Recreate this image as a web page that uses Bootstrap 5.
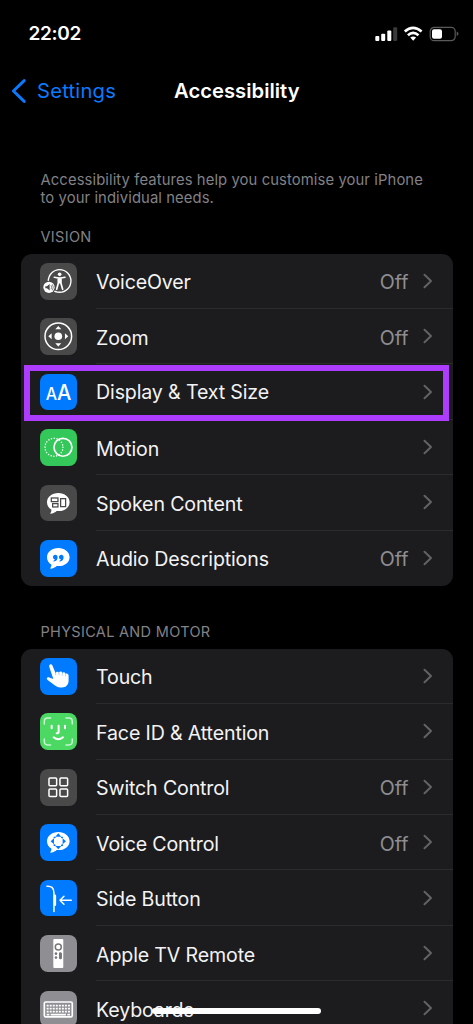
<!DOCTYPE html>
<html lang="en">
<head>
<meta charset="utf-8">
<meta name="viewport" content="width=device-width, initial-scale=1">
<title>Accessibility</title>
<link href="https://cdn.jsdelivr.net/npm/bootstrap@5.3.0/dist/css/bootstrap.min.css" rel="stylesheet">
<style>
body{background:#000;color:#f3f3f5;font-family:Inter,"Liberation Sans",sans-serif;height:1024px;overflow:hidden;letter-spacing:0}
.screen{width:473px;height:1024px;overflow:hidden}
.status{height:68px;padding:0 14px 0 28.5px}
.clock{font-size:19px;font-weight:600;line-height:68px;color:#fff;letter-spacing:-.3px}
.topbar{height:46px;padding-left:11px;display:grid;grid-template-columns:163px 1fr}
.back{color:#0a7aff;font-size:20.2px;gap:10px;letter-spacing:.22px}
.title{font-size:20.2px;font-weight:600;color:#fff;letter-spacing:.03px}
.note{color:#828286;font-size:14.8px;line-height:18px;padding:57px 0 0 40.5px;height:107px;letter-spacing:.1px}
.heading{color:#828286;font-size:14.5px;line-height:18px;padding-left:40.5px;height:32.5px;padding-top:7px;letter-spacing:.32px}
.heading.later{height:62.5px;padding-top:37px}
.group{background:#1c1c1e;border-radius:11px;margin:0 20.5px;width:432px;border:0}
.item{height:55.45px;background:transparent;border:0;padding:0 0 0 19.8px;color:inherit}
.tile{width:36.6px;height:36.6px;border-radius:8px;flex:none;margin-right:19.2px}
.tile svg{display:block;width:100%;height:100%}
.gray{background:#49494a}.blue{background:#007aff}.green{background:#34c759}.mint{background:#4bd964}.silver{background:#8e8e93}
.line{border-bottom:1px solid #2b2b2d;height:100%;padding-right:20px}
.item:last-child .line{border-color:transparent}
.label{font-size:19.6px;line-height:24px;letter-spacing:-.15px;padding-top:3px}
.label.level{padding-top:0}
.value{font-size:19.6px;line-height:24px;color:#8e8e93;margin-right:14px;padding-top:3px}
.chev{width:10px;height:16px}
.marked{outline:6px solid #ae3cff;left:24px;top:364.5px;width:424.5px;height:56px;outline-offset:-6px;z-index:2}
.homebar{left:152px;top:1007.5px;width:169px;height:6px;border-radius:3px;background:#fff;z-index:3}
</style>
</head>
<body>
<svg width="0" height="0" class="position-absolute"><defs>
<symbol id="chev" viewBox="0 0 10 16"><path d="M1.500 1.800 8 8l-6.500 6.200" fill="none" stroke="#626266" stroke-width="2" stroke-linecap="round" stroke-linejoin="round"/></symbol>
<symbol id="bubble" viewBox="0 0 110 110"><path d="M55 24C36 24 21 36 21 52c0 9 5 17 13 22 1 4-1 8-3 11 0 2 2 2 4 1 6-2 11-4 15-8C72 81 89 69 89 52 89 36 74 24 55 24Z" fill="#fff"/></symbol>
</defs></svg>
<main class="screen position-relative">
<header>
<div class="status d-flex align-items-center justify-content-between"><span class="clock">22:02</span>
<svg width="84" height="18" viewBox="0 0 84 18"><g fill="#fff"><rect x="0.300" y="11" width="4" height="5" rx="1"/><rect x="6.200" y="8.800" width="4" height="7.200" rx="1"/><rect x="12.300" y="5.500" width="4" height="10.500" rx="1"/><rect x="18.200" y="2.200" width="4" height="13.800" rx="1" fill="#39393b"/></g><g transform="translate(0 .5)"><g fill="none" stroke="#fff" stroke-width="2.700"><path d="M29.800 6.100q8.200-7.400 16.800 0"/><path d="M32.900 9.700q5.200-4.600 10.600 0"/></g><path d="m35.300 12 2.900 3.200 2.900-3.200q-2.900-2.200-5.800 0Z" fill="#fff"/><rect x="55.200" y="1.800" width="25" height="13.400" rx="4" fill="none" stroke="#59595b" stroke-width="1.200"/><rect x="57" y="3.700" width="10" height="9.600" rx="2" fill="#fff"/><path d="M81.700 6v4.600q1.800-.8 1.800-2.300T81.700 6Z" fill="#59595b"/></g></svg></div>
<nav class="topbar align-items-center"><a class="back d-flex align-items-center text-decoration-none"><svg width="16" height="26" viewBox="0 0 16 26"><path d="M13.200 2.600 2.400 13l10.800 10.400" fill="none" stroke="#0a7aff" stroke-width="2.900" stroke-linecap="round" stroke-linejoin="round"/></svg><span>Settings</span></a><span class="title">Accessibility</span></nav>
</header>
<p class="note mb-0">Accessibility features help you customise your iPhone<br>to your individual needs.</p>
<h2 class="heading fw-normal mb-0">VISION</h2>
<div class="group list-group">
<div class="item list-group-item d-flex align-items-center"><span class="tile gray"><svg viewBox="0 0 110 110"><circle cx="59" cy="54" r="34" fill="none" stroke="#fff" stroke-width="4"/><circle cx="59" cy="34" r="5.500" fill="#fff"/><path d="M43 43q16 4 32 0M59 46v13m-4-13v15l-5 18m13-33v15l5 18" fill="none" stroke="#fff" stroke-width="5" stroke-linecap="round"/><circle cx="27" cy="73" r="20" fill="#49494a"/><circle cx="27" cy="73" r="17" fill="#fff"/><path d="M16 70h5l8-7v20l-8-7h-5Z" fill="#49494a"/><path d="M33 67q4 6 0 12m4-15q6 9 0 18" stroke="#49494a" fill="none" stroke-width="2"/></svg></span><div class="line d-flex align-items-center flex-grow-1"><span class="label me-auto">VoiceOver</span><span class="value">Off</span><svg class="chev"><use href="#chev"/></svg></div></div>
<div class="item list-group-item d-flex align-items-center"><span class="tile gray"><svg viewBox="0 0 110 110"><circle cx="55" cy="55" r="40" fill="none" stroke="#fff" stroke-width="4.500"/><g fill="#fff"><circle cx="55" cy="55" r="11.500"/><path d="m55 24 9 10H46Zm0 62 9-10H46ZM25 55l10-9v18Zm60 0-10-9v18Z"/></g></svg></span><div class="line d-flex align-items-center flex-grow-1"><span class="label me-auto">Zoom</span><span class="value">Off</span><svg class="chev"><use href="#chev"/></svg></div></div>
<div class="item list-group-item d-flex align-items-center"><span class="tile blue"><svg viewBox="0 0 110 110" fill="#fff" font-family="Inter,sans-serif"><text x="17" y="78" font-size="51" font-weight="500" textLength="34" lengthAdjust="spacingAndGlyphs">A</text><text x="51" y="78" font-size="65" font-weight="500" textLength="43" lengthAdjust="spacingAndGlyphs">A</text></svg></span><div class="line d-flex align-items-center flex-grow-1"><span class="label level me-auto">Display &amp; Text Size</span><svg class="chev"><use href="#chev"/></svg></div></div>
<div class="item list-group-item d-flex align-items-center"><span class="tile green"><svg viewBox="0 0 110 110" fill="none" stroke="#fff"><circle cx="42" cy="55" r="27" stroke-width="4.500" stroke-linecap="round" stroke-dasharray=".1 8.380"/><circle cx="69" cy="55" r="27" stroke-width="5"/></svg></span><div class="line d-flex align-items-center flex-grow-1"><span class="label me-auto">Motion</span><svg class="chev"><use href="#chev"/></svg></div></div>
<div class="item list-group-item d-flex align-items-center"><span class="tile gray"><svg viewBox="0 0 110 110"><use href="#bubble"/><g fill="none" stroke="#49494a" stroke-width="3.800"><rect x="34" y="39" width="20" height="11"/><rect x="38" y="56" width="16" height="10"/><rect x="62" y="41" width="15" height="24"/></g></svg></span><div class="line d-flex align-items-center flex-grow-1"><span class="label me-auto">Spoken Content</span><svg class="chev"><use href="#chev"/></svg></div></div>
<div class="item list-group-item d-flex align-items-center"><span class="tile blue"><svg viewBox="0 0 110 110"><use href="#bubble"/><path d="M46 44c-4 0-7 3-7 7s3 7 6 7c-.500 2-2 3-4 4-2 1-1 3 1 3 7-1 11-6 11-13 0-5-3-8-7-8Zm18 0c-4 0-7 3-7 7s3 7 6 7c-.500 2-2 3-4 4-2 1-1 3 1 3 7-1 11-6 11-13 0-5-3-8-7-8Z" fill="#007aff"/></svg></span><div class="line d-flex align-items-center flex-grow-1"><span class="label me-auto">Audio Descriptions</span><span class="value">Off</span><svg class="chev"><use href="#chev"/></svg></div></div>
</div>
<h2 class="heading later fw-normal mb-0">PHYSICAL AND MOTOR</h2>
<div class="group list-group">
<div class="item list-group-item d-flex align-items-center"><span class="tile blue"><svg viewBox="0 0 110 110"><path d="M28 22c2-4 7-4 9 0l10 24c0-5 8-7 10-2 2-5 9-4 10 1 3-4 9-2 10 3 5-3 9 1 9 6v14c0 13-8 21-20 21-10 0-16-2-22-7L23 66c-5-4-2-9 3-8l14 5L28 27q-1-3 0-5Z" fill="#fff"/><path d="M47 44v8m10-8v8m10-7v8m10-5v7" stroke="#007aff" stroke-width="1"/></svg></span><div class="line d-flex align-items-center flex-grow-1"><span class="label me-auto">Touch</span><svg class="chev"><use href="#chev"/></svg></div></div>
<div class="item list-group-item d-flex align-items-center"><span class="tile mint"><svg viewBox="0 0 110 110" fill="none" stroke="#fff" stroke-linecap="round"><path d="M13 33V25q0-10 10-10h9M78 15h9q10 0 10 10v8M13 78v8q0 10 10 10h9M78 96h9q10 0 10-10v-8" stroke-width="4.500" opacity=".7"/><path d="M35 38v8m40-8v8M56 38v18q0 5-6 5M41 73q14 12 28 0" stroke-width="6"/></svg></span><div class="line d-flex align-items-center flex-grow-1"><span class="label me-auto">Face ID &amp; Attention</span><svg class="chev"><use href="#chev"/></svg></div></div>
<div class="item list-group-item d-flex align-items-center"><span class="tile gray"><svg viewBox="0 0 110 110" fill="none" stroke="#fff" stroke-width="4.500"><rect x="27" y="27" width="23" height="23" rx="3"/><rect x="60" y="27" width="23" height="23" rx="3"/><rect x="27" y="60" width="23" height="23" rx="3"/><rect x="60" y="60" width="23" height="23" rx="3"/></svg></span><div class="line d-flex align-items-center flex-grow-1"><span class="label me-auto">Switch Control</span><span class="value">Off</span><svg class="chev"><use href="#chev"/></svg></div></div>
<div class="item list-group-item d-flex align-items-center"><span class="tile blue"><svg viewBox="0 0 110 110"><use href="#bubble"/><g fill="#007aff"><path d="m55 28 9 10H46Zm0 48 9-10H46ZM32 52l10-9v18Zm46 0-10-9v18Z"/><path d="M43 43v-3h4m16 0h4v3m0 18v3h-4m-16 0h-4v-3" fill="none" stroke="#007aff" stroke-width="4"/></g></svg></span><div class="line d-flex align-items-center flex-grow-1"><span class="label me-auto">Voice Control</span><span class="value">Off</span><svg class="chev"><use href="#chev"/></svg></div></div>
<div class="item list-group-item d-flex align-items-center"><span class="tile blue"><svg viewBox="0 0 110 110" fill="none" stroke="#fff" stroke-width="4.500" stroke-linecap="round"><path d="M21 19c14-1 21 5 21 20v56M60 61h34M72 49 60 61l12 12" stroke-linejoin="round"/><path d="M45 47v28" stroke-width="7"/></svg></span><div class="line d-flex align-items-center flex-grow-1"><span class="label me-auto">Side Button</span><svg class="chev"><use href="#chev"/></svg></div></div>
<div class="item list-group-item d-flex align-items-center"><span class="tile silver"><svg viewBox="0 0 110 110"><rect x="40" y="12" width="30" height="87" rx="3" fill="#fff"/><circle cx="55" cy="36" r="9" fill="none" stroke="#77777b" stroke-width="4.500"/><g fill="#77777b"><circle cx="48" cy="56" r="4"/><circle cx="48" cy="68" r="4"/><circle cx="61" cy="56" r="4"/><rect x="57" y="53" width="9" height="20" rx="4"/></g></svg></span><div class="line d-flex align-items-center flex-grow-1"><span class="label me-auto">Apple TV Remote</span><svg class="chev"><use href="#chev"/></svg></div></div>
<div class="item list-group-item d-flex align-items-center"><span class="tile silver"><svg viewBox="0 0 110 110" fill="none" stroke="#fff"><rect x="13" y="33" width="84" height="45" rx="4" stroke-width="5"/><path d="M20 44h70M20 53h70M20 62h70" stroke-width="5" stroke-dasharray="6 3.140"/><path d="M20 71h8m4 0h46m4 0h8" stroke-width="5"/></svg></span><div class="line d-flex align-items-center flex-grow-1"><span class="label me-auto">Keyboards</span><svg class="chev"><use href="#chev"/></svg></div></div>
</div>
<div class="marked position-absolute"></div>
<div class="homebar position-absolute"></div>
</main>
<script src="https://cdn.jsdelivr.net/npm/bootstrap@5.3.0/dist/js/bootstrap.bundle.min.js"></script>
</body>
</html>
